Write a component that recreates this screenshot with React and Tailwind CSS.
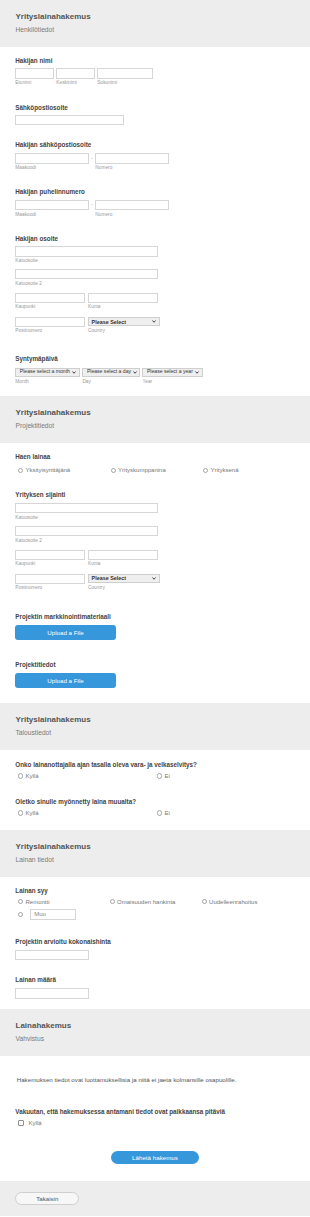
import React from "react";

const Header = ({ title, sub }) => (
  <div className="h-[46.5px] bg-[#ededed] pl-[15.5px] pt-[11.7px]">
    <div className="text-[8px] leading-[10px] font-bold text-[#555555]">{title}</div>
    <div className="mt-[4px] text-[6.7px] leading-[8px] text-[#7a7a7a]">{sub}</div>
  </div>
);

const Label = ({ children, className = "" }) => (
  <div className={"text-[6.3px] leading-[8px] font-bold text-[#444444] whitespace-nowrap " + className}>{children}</div>
);

const Sub = ({ children, className = "" }) => (
  <div className={"text-[4.8px] leading-[6px] text-[#9a9a9a] whitespace-nowrap " + className}>{children}</div>
);

const Input = ({ className = "" }) => (
  <div className={"h-[10.4px] border border-[#d6d6d6] bg-white " + className} />
);

const Chevron = () => (
  <svg width="4" height="3" viewBox="0 0 8 6" className="shrink-0">
    <path d="M1 1 L4 4.5 L7 1" fill="none" stroke="#333" strokeWidth="1.8" />
  </svg>
);

const Select = ({ text, bold, className = "" }) => (
  <div
    className={
      "flex items-center justify-between border border-[#cfcfcf] bg-[#efefef] pr-[2.5px] text-[#333] whitespace-nowrap " +
      className
    }
  >
    <span className={bold ? "text-[5.4px] font-bold" : "text-[5.1px]"}>{text}</span>
    <Chevron />
  </div>
);

const Circle = () => (
  <span className="w-[5.2px] h-[5.2px] rounded-full border border-[#a5a5a5] bg-white shrink-0" />
);

const Radio = ({ label }) => (
  <div className="flex items-center">
    <Circle />
    <span className="ml-[2px] text-[6px] leading-[8px] text-[#777777] whitespace-nowrap">{label}</span>
  </div>
);

const Address = ({ first }) => (
  <div>
    <Input className={"w-[142.4px] " + first} />
    <Sub className="mt-[1.6px]">Katuosoite</Sub>
    <Input className="w-[142.4px] mt-[4.6px]" />
    <Sub className="mt-[2px]">Katuosoite 2</Sub>
    <div className="flex gap-[3.3px] mt-[5.6px]">
      <div className="w-[69.4px]">
        <Input />
        <Sub className="mt-[1.3px]">Kaupunki</Sub>
      </div>
      <div className="w-[69.7px]">
        <Input />
        <Sub className="mt-[1.3px]">Kunta</Sub>
      </div>
    </div>
    <div className="flex gap-[3.3px] mt-[6.3px]">
      <div className="w-[69.4px]">
        <Input />
        <Sub className="mt-[1.3px]">Postinumero</Sub>
      </div>
      <div className="w-[71.7px]">
        <Select text="Please Select" bold className="h-[9.7px] pl-[2.6px]" />
        <Sub className="mt-[1.6px]">Country</Sub>
      </div>
    </div>
  </div>
);

const UploadBtn = () => (
  <div className="mt-[4px] w-[100.4px] h-[15.7px] rounded-[3px] bg-[#3797db] flex items-center justify-center text-[6.2px] text-white">
    Upload a File
  </div>
);

export default function App() {
  return (
    <div className="w-[310px] bg-white font-['Liberation_Sans',Arial,sans-serif]">
      {/* Section 1 */}
      <Header title="Yrityslainahakemus" sub="Henkilötiedot" />
      <div className="pl-[15.3px]">
        <Label className="mt-[10.2px]">Hakijan nimi</Label>
        <div className="flex gap-[2.6px] mt-[3.6px]">
          <div className="w-[38.4px]">
            <Input />
            <Sub className="mt-[1px]">Etunimi</Sub>
          </div>
          <div className="w-[38.4px]">
            <Input />
            <Sub className="mt-[1px]">Keskinimi</Sub>
          </div>
          <div className="w-[55.7px]">
            <Input />
            <Sub className="mt-[1px]">Sukunimi</Sub>
          </div>
        </div>

        <Label className="mt-[18px]">Sähköpostiosoite</Label>
        <Input className="w-[108.4px] mt-[3.3px]" />

        <Label className="mt-[15.9px]">Hakijan sähköpostiosoite</Label>
        <div className="flex mt-[4px]">
          <div className="w-[73.4px]">
            <Input />
            <Sub className="mt-[1.3px]">Maakoodi</Sub>
          </div>
          <div className="w-[6.6px] h-[10.4px] flex items-center justify-center text-[5px] text-[#999]">-</div>
          <div className="w-[73.4px]">
            <Input />
            <Sub className="mt-[1.3px]">Numero</Sub>
          </div>
        </div>

        <Label className="mt-[17px]">Hakijan puhelinnumero</Label>
        <div className="flex mt-[3.7px]">
          <div className="w-[73.4px]">
            <Input />
            <Sub className="mt-[1.6px]">Maakoodi</Sub>
          </div>
          <div className="w-[6.6px] h-[10.4px] flex items-center justify-center text-[5px] text-[#999]">-</div>
          <div className="w-[73.4px]">
            <Input />
            <Sub className="mt-[1.6px]">Numero</Sub>
          </div>
        </div>

        <Label className="mt-[17px]">Hakijan osoite</Label>
        <Address first="mt-[3.6px]" />

        <Label className="mt-[21px]">Syntymäpäivä</Label>
        <div className="flex gap-[2.4px] mt-[4.3px]">
          <div className="w-[64.7px]">
            <Select text="Please select a month" className="h-[9px] pl-[3.5px]" />
            <Sub className="mt-[2.4px]">Month</Sub>
          </div>
          <div className="w-[57.7px]">
            <Select text="Please select a day" className="h-[9px] pl-[3.5px]" />
            <Sub className="mt-[2.4px]">Day</Sub>
          </div>
          <div className="w-[60.3px]">
            <Select text="Please select a year" className="h-[9px] pl-[3.5px]" />
            <Sub className="mt-[2.4px]">Year</Sub>
          </div>
        </div>
      </div>

      {/* Section 2 */}
      <div className="mt-[11.3px]">
        <Header title="Yrityslainahakemus" sub="Projektitiedot" />
      </div>
      <div className="pl-[15.3px]">
        <Label className="mt-[10.5px]">Haen lainaa</Label>
        <div className="flex mt-[4.7px] pl-[3px]">
          <div className="w-[92.6px]"><Radio label="Yksityisyrittäjänä" /></div>
          <div className="w-[92.4px]"><Radio label="Yrityskumppanina" /></div>
          <div><Radio label="Yrityksenä" /></div>
        </div>

        <Label className="mt-[17.3px]">Yrityksen sijainti</Label>
        <Address first="mt-[3.7px]" />

        <Label className="mt-[21.3px]">Projektin markkinointimateriaali</Label>
        <UploadBtn />

        <Label className="mt-[20.3px]">Projektitiedot</Label>
        <UploadBtn />
      </div>

      {/* Section 3 */}
      <div className="mt-[15px]">
        <Header title="Yrityslainahakemus" sub="Taloustiedot" />
      </div>
      <div className="pl-[15.3px]">
        <Label className="mt-[10.8px]">Onko lainanottajalla ajan tasalla oleva vara- ja velkaselvitys?</Label>
        <div className="flex mt-[3.4px] pl-[3px]">
          <div className="w-[139px]"><Radio label="Kyllä" /></div>
          <div><Radio label="Ei" /></div>
        </div>
        <Label className="mt-[17.6px]">Oletko sinulle myönnetty laina muualta?</Label>
        <div className="flex mt-[3.4px] pl-[3px]">
          <div className="w-[139px]"><Radio label="Kyllä" /></div>
          <div><Radio label="Ei" /></div>
        </div>
      </div>

      {/* Section 4 */}
      <div className="mt-[13.3px]">
        <Header title="Yrityslainahakemus" sub="Lainan tiedot" />
      </div>
      <div className="pl-[15.3px]">
        <Label className="mt-[9.8px]">Lainan syy</Label>
        <div className="flex mt-[3px] pl-[3px]">
          <div className="w-[91.6px]"><Radio label="Remontti" /></div>
          <div className="w-[92px]"><Radio label="Omaisuuden hankinta" /></div>
          <div><Radio label="Uudelleenrahoitus" /></div>
        </div>
        <div className="flex items-center mt-[3.7px] pl-[3px] h-[10.3px]">
          <Circle />
          <div className="ml-[6.8px] w-[45.4px] h-[10.3px] border border-[#d6d6d6] flex items-center pl-[3px] text-[6px] text-[#888]">
            Muu
          </div>
        </div>

        <Label className="mt-[18.7px]">Projektin arvioitu kokonaishinta</Label>
        <Input className="w-[73.4px] mt-[3.7px]" />

        <Label className="mt-[15.9px]">Lainan määrä</Label>
        <Input className="w-[73.4px] mt-[4px]" />
      </div>

      {/* Section 5 */}
      <div className="mt-[10.6px]">
        <Header title="Lainahakemus" sub="Vahvistus" />
      </div>
      <div className="pl-[15.3px] pb-[16.4px]">
        <div className="mt-[20.2px] pl-[1.4px] text-[6.2px] leading-[8px] text-[#555] whitespace-nowrap">
          Hakemuksen tiedot ovat luottamuksellisia ja niitä ei jaeta kolmansille osapuolille.
        </div>
        <Label className="mt-[24px]">Vakuutan, että hakemuksessa antamani tiedot ovat paikkaansa pitäviä</Label>
        <div className="flex items-center mt-[3px] pl-[3px]">
          <span className="w-[5.3px] h-[5.3px] rounded-[1px] border border-[#8f8f8f] bg-white shrink-0" />
          <span className="ml-[5px] text-[6px] leading-[8px] text-[#777]">Kyllä</span>
        </div>
        <div className="flex justify-center mt-[24.6px] pr-[15.3px]">
          <div className="w-[88px] h-[13px] rounded-full bg-[#3797db] flex items-center justify-center text-[6.2px] text-white">
            Lähetä hakemus
          </div>
        </div>
      </div>

      {/* Footer */}
      <div className="h-[35.3px] bg-[#ededed] pl-[15.3px] pt-[11.6px]">
        <div className="w-[64px] h-[12.7px] rounded-full border border-[#cfcfcf] bg-[#f7f7f7] flex items-center justify-center text-[6.1px] text-[#555]">
          Takaisin
        </div>
      </div>
    </div>
  );
}
